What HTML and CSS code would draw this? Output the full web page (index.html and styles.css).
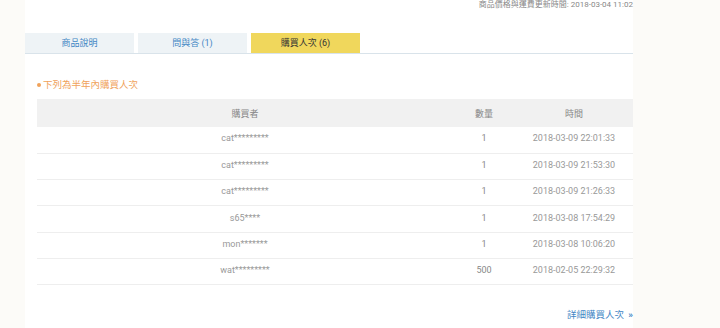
FILE: index.html
```html
<!DOCTYPE html>
<html lang="zh-Hant">
<head>
    <meta charset="UTF-8">
    <title>購買人次</title>
    <link rel="stylesheet" href="styles.css">
</head>
<body>
    <div class="page">
        <div class="update-time">商品價格與運費更新時間: 2018-03-04 11:02</div>

        <div class="tabs">
            <div class="tab">商品說明</div>
            <div class="tab">問與答 (1)</div>
            <div class="tab active">購買人次 (6)</div>
        </div>

        <div class="panel">
            <div class="note"><span class="dot"></span>下列為半年內購買人次</div>

            <table class="buyers">
                <thead>
                    <tr>
                        <th class="col-name">購買者</th>
                        <th class="col-qty">數量</th>
                        <th class="col-time">時間</th>
                    </tr>
                </thead>
                <tbody>
                    <tr><td>cat*********</td><td>1</td><td>2018-03-09 22:01:33</td></tr>
                    <tr><td>cat*********</td><td>1</td><td>2018-03-09 21:53:30</td></tr>
                    <tr><td>cat*********</td><td>1</td><td>2018-03-09 21:26:33</td></tr>
                    <tr><td>s65****</td><td>1</td><td>2018-03-08 17:54:29</td></tr>
                    <tr><td>mon*******</td><td>1</td><td>2018-03-08 10:06:20</td></tr>
                    <tr><td>wat*********</td><td>500</td><td>2018-02-05 22:29:32</td></tr>
                </tbody>
            </table>

            <div class="more"><a href="#">詳細購買人次 <span class="arrows">»</span></a></div>
        </div>
    </div>
</body>
</html>
```

FILE: styles.css
```css
* {
    margin: 0;
    padding: 0;
    box-sizing: border-box;
}

body {
    background: #fcfbf8;
    font-family: Roboto, "Noto Sans CJK TC", sans-serif;
    color: #999;
}

.page {
    width: 608px;
    margin-left: 25px;
    min-height: 328px;
    background: #fff;
}

.update-time {
    text-align: right;
    font-size: 8px;
    line-height: 10px;
    padding-top: 0;
    color: #888;
}

.tabs {
    display: flex;
    gap: 4px;
    margin-top: 23px;
    border-bottom: 1px solid #d9e3ea;
}

.tab {
    width: 109px;
    height: 20px;
    line-height: 20px;
    text-align: center;
    font-size: 9px;
    color: #3f86c4;
    background: #eef3f6;
}

.tab.active {
    background: #f0d75c;
    color: #333;
}

.panel {
    padding-left: 12px;
}

.note {
    margin-top: 24px;
    font-size: 9.5px;
    line-height: 14px;
    color: #f0a25a;
    display: flex;
    align-items: center;
}

.dot {
    width: 4px;
    height: 4px;
    border-radius: 50%;
    background: #f0a25a;
    margin-right: 2px;
}

.buyers {
    width: 100%;
    margin-top: 7px;
    border-collapse: collapse;
    font-size: 9px;
}

.buyers th {
    height: 28px;
    background: #f1f1f1;
    font-weight: normal;
    color: #888;
}

.buyers td {
    height: 26.3px;
    text-align: center;
    border-bottom: 1px solid #eee;
    padding-bottom: 3px;
}

.col-name {
    width: 416px;
}

.col-qty {
    width: 62px;
}

.buyers td:nth-child(2) {
    color: #888;
}

.more {
    text-align: right;
    margin-top: 22px;
    font-size: 9.5px;
}

.more a {
    color: #3f86c4;
    text-decoration: none;
}

.arrows {
    font-weight: bold;
    margin-left: 2px;
}
```
